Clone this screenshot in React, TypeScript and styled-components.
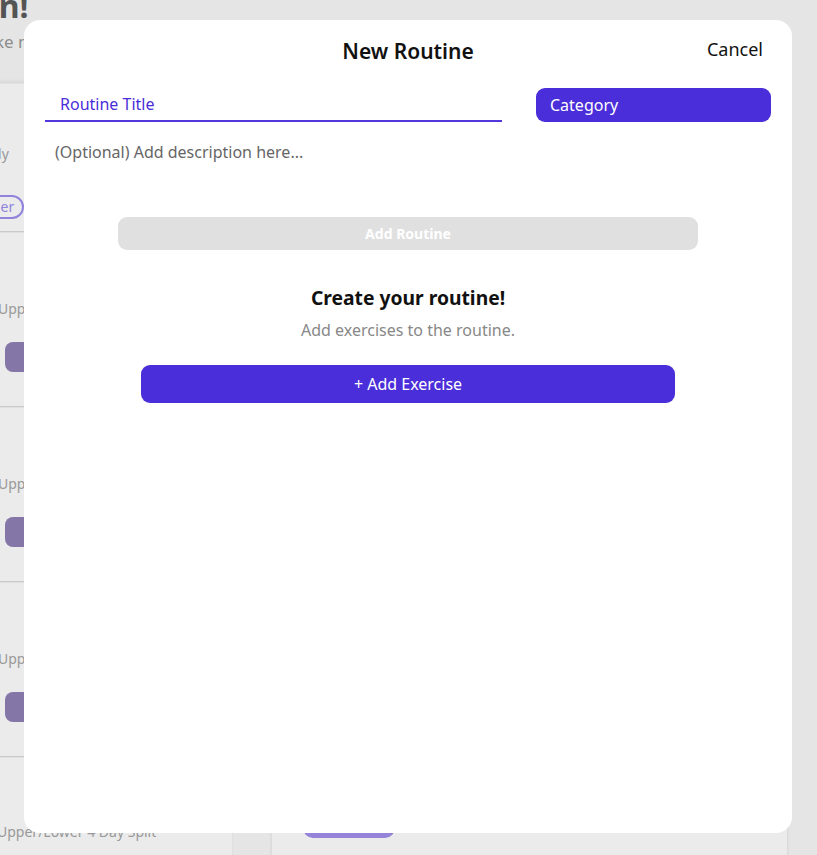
import React from "react";
import styled, { createGlobalStyle } from "styled-components";

const Global = createGlobalStyle`
  html, body { margin: 0; padding: 0; }
  body {
    font-family: "Noto Sans", "Open Sans", "Liberation Sans", sans-serif;
    background: #f9f9f9;
  }
  * { box-sizing: border-box; }
`;

const Page = styled.div`
  position: relative;
  width: 817px;
  height: 855px;
  overflow: hidden;
  background: #f9f9f9;
`;

const Header = styled.header`
  height: 83px;
  margin-left: -300px;
  display: flex;
  flex-direction: column;
  align-items: flex-start;
`;

const HeaderTitle = styled.h1`
  margin: -14px 0 0;
  font-size: 32px;
  font-weight: 700;
  color: #5c5c5c;
  line-height: 40px;
  white-space: nowrap;
`;

const HeaderSub = styled.p`
  margin: 4px 0 0 205px;
  font-size: 17px;
  color: #9a9a9a;
  white-space: nowrap;
`;

const Body = styled.div`
  display: flex;
  gap: 40px;
  margin-left: -180px;
`;

const Sidebar = styled.div`
  width: 412px;
  display: flex;
  flex-direction: column;
  box-shadow: 0 -2px 3px rgba(0, 0, 0, 0.06);
`;

const SideCard = styled.div<{ $h: number }>`
  height: ${(p) => p.$h}px;
  background: #ffffff;
  border-bottom: 1px solid #dcdcdc;
  border-top: 1px solid #f3f3f3;
  padding: 0 0 0 120px;
  display: flex;
  flex-direction: column;
  align-items: flex-start;
`;

const SideText = styled.div<{ $top: number; $left: number }>`
  margin-top: ${(p) => p.$top}px;
  margin-left: ${(p) => p.$left}px;
  font-size: 14px;
  line-height: 21px;
  color: #a7a7a7;
  white-space: nowrap;
`;

const Pill = styled.div`
  margin-top: 31px;
  height: 24px;
  border: 2px solid #9c8ff0;
  border-radius: 12px;
  color: #9c8ff0;
  font-size: 14px;
  line-height: 20px;
  padding: 0 8px 0 12px;
`;

const SideButton = styled.div`
  margin-top: 23px;
  margin-left: 65px;
  width: 120px;
  height: 30px;
  border-radius: 8px;
  background: #9181b7;
`;

const Main = styled.div`
  width: 515px;
  margin-top: 650px;
  height: 200px;
  background: #ffffff;
  box-shadow: 0 0 3px rgba(0, 0, 0, 0.12);
  padding: 69px 0 0 31px;
`;

const MainButton = styled.div`
  width: 92px;
  height: 36px;
  border-radius: 10px;
  background: #a18feb;
`;

const Overlay = styled.div`
  position: absolute;
  inset: 0;
  background: rgba(0, 0, 0, 0.08);
  display: flex;
  justify-content: flex-start;
  padding: 20px 0 0 24px;
`;

const Modal = styled.div`
  width: 768px;
  height: 813px;
  background: #ffffff;
  border-radius: 16px;
  padding: 0 21px;
  display: flex;
  flex-direction: column;
`;

const ModalHead = styled.div`
  position: relative;
  height: 60px;
  display: flex;
  justify-content: center;
`;

const ModalTitle = styled.h2`
  margin: 16px 0 0;
  font-size: 21px;
  font-weight: 600;
  color: #111;
  line-height: 30px;
`;

const CancelButton = styled.button`
  position: absolute;
  right: 8px;
  top: 15px;
  border: 0;
  background: none;
  font-family: inherit;
  font-size: 18px;
  color: #111;
  padding: 0;
  line-height: 28px;
`;

const FieldRow = styled.div`
  display: flex;
  align-items: flex-start;
  gap: 34px;
  margin-top: 8px;
`;

const TitleInput = styled.div`
  width: 457px;
  height: 34px;
  border-bottom: 2px solid #5238dc;
  padding: 4px 0 0 15px;
  font-size: 16px;
  color: #4a2ed9;
  line-height: 24px;
`;

const CategoryButton = styled.div`
  width: 235px;
  height: 34px;
  border-radius: 9px;
  background: #4a2ed9;
  color: #fff;
  font-size: 16px;
  line-height: 34px;
  padding-left: 14px;
`;

const Description = styled.div`
  margin-top: 17px;
  padding-left: 10px;
  font-size: 16px;
  color: #666;
  line-height: 26px;
  height: 64px;
`;

const DisabledButton = styled.div`
  align-self: center;
  margin-top: 14px;
  width: 580px;
  height: 33px;
  border-radius: 9px;
  background: #e0e0e0;
  color: #fff;
  font-size: 14px;
  font-weight: 700;
  text-align: center;
  line-height: 33px;
`;

const EmptyState = styled.div`
  display: flex;
  flex-direction: column;
  align-items: center;
  margin-top: 35px;
`;

const EmptyTitle = styled.div`
  font-size: 19.3px;
  font-weight: 700;
  color: #111;
  line-height: 26px;
`;

const EmptyText = styled.div`
  margin-top: 8px;
  font-size: 16px;
  color: #888;
  line-height: 22px;
`;

const PrimaryButton = styled.div`
  margin-top: 24px;
  width: 534px;
  height: 38px;
  border-radius: 9px;
  background: #4a2ed9;
  color: #fff;
  font-size: 16px;
  text-align: center;
  line-height: 38px;
`;

export default function App() {
  return (
    <Page>
      <Global />
      <Header>
        <HeaderTitle>Welcome back, John!</HeaderTitle>
        <HeaderSub>Time to make moves</HeaderSub>
      </Header>
      <Body>
        <Sidebar>
          <SideCard $h={149}>
            <SideText $top={59} $left={-40}>Train effortlessly</SideText>
            <Pill>Beginner</Pill>
          </SideCard>
          <SideCard $h={175}>
            <SideText $top={65} $left={58}>Upper Body</SideText>
            <SideButton />
          </SideCard>
          <SideCard $h={175}>
            <SideText $top={65} $left={58}>Upper Body</SideText>
            <SideButton />
          </SideCard>
          <SideCard $h={175}>
            <SideText $top={65} $left={58}>Upper Body</SideText>
            <SideButton />
          </SideCard>
          <SideCard $h={120}>
            <SideText $top={63} $left={57}>Upper/Lower 4 Day Split</SideText>
          </SideCard>
        </Sidebar>
        <Main>
          <MainButton />
        </Main>
      </Body>
      <Overlay>
        <Modal>
          <ModalHead>
            <ModalTitle>New Routine</ModalTitle>
            <CancelButton>Cancel</CancelButton>
          </ModalHead>
          <FieldRow>
            <TitleInput>Routine Title</TitleInput>
            <CategoryButton>Category</CategoryButton>
          </FieldRow>
          <Description>(Optional) Add description here...</Description>
          <DisabledButton>Add Routine</DisabledButton>
          <EmptyState>
            <EmptyTitle>Create your routine!</EmptyTitle>
            <EmptyText>Add exercises to the routine.</EmptyText>
            <PrimaryButton>+ Add Exercise</PrimaryButton>
          </EmptyState>
        </Modal>
      </Overlay>
    </Page>
  );
}
